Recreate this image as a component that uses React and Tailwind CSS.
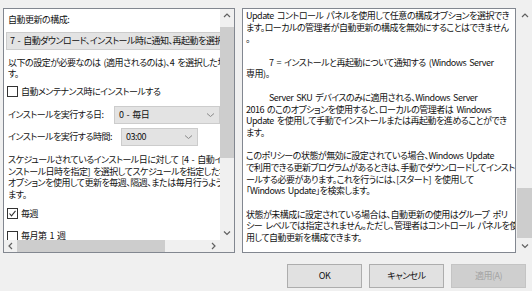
import React from 'react';

const Arrow = ({ dir }) => {
  const pts = {
    up: '1,5 4,2 7,5',
    down: '1,2.5 4,5.5 7,2.5',
    left: '5,1 2,4 5,7',
    right: '3,1 6,4 3,7',
  }[dir];
  return (
    <svg width="8" height="8" viewBox="0 0 8 8">
      <polyline points={pts} fill="none" stroke="#606060" strokeWidth="1.2" />
    </svg>
  );
};

const ComboChevron = () => (
  <svg width="9" height="6" viewBox="0 0 9 6">
    <polyline points="1,1.5 4.5,4.5 8,1.5" fill="none" stroke="#8a8a8a" strokeWidth="1" />
  </svg>
);

const Check = ({ checked }) => (
  <span className="w-[11px] h-[11px] border border-[#333333] bg-white flex items-center justify-center shrink-0">
    {checked && (
      <svg width="9" height="9" viewBox="0 0 9 9">
        <polyline points="1.5,4.5 3.5,6.8 7.5,1.8" fill="none" stroke="#333333" strokeWidth="1.1" />
      </svg>
    )}
  </span>
);

const rightLines = [
  { t: 'Update コントロール パネルを使用して任意の構成オプションを選択でき' },
  { t: 'ます。ローカルの管理者が自動更新の構成を無効にすることはできません' },
  { t: '。' },
  { t: '' },
  { t: '7 = インストールと再起動について通知する (Windows Server', indent: true },
  { t: '専用)。' },
  { t: '' },
  { t: 'Server SKU デバイスのみに適用される、Windows Server', indent: true },
  { t: '2016 のこのオプションを使用すると、ローカルの管理者は Windows' },
  { t: 'Update を使用して手動でインストールまたは再起動を進めることができ' },
  { t: 'ます。' },
  { t: '' },
  { t: 'このポリシーの状態が無効に設定されている場合、Windows Update' },
  { t: 'で利用できる更新プログラムがあるときは、手動でダウンロードしてインスト' },
  { t: 'ールする必要があります。これを行うには、[スタート] を使用して' },
  { t: '「Windows Update」を検索します。' },
  { t: '' },
  { t: '状態が未構成に設定されている場合は、自動更新の使用はグループ ポリ' },
  { t: 'シー レベルでは指定されません。ただし、管理者はコントロール パネルを使' },
  { t: '用して自動更新を構成できます。' },
];

export default function App() {
  return (
    <div className="w-[532px] h-[291px] bg-[#f0f0f0] overflow-hidden text-[9px] leading-[11.7px] tracking-[-0.5px] [word-spacing:1.5px] text-[#111111] font-['Noto_Sans_CJK_JP',sans-serif] [font-feature-settings:'palt']">
      <div className="flex pt-[8px] pl-[3px]">
        {/* left: option panel */}
        <div className="w-[232px] h-[245px] border border-[#828790] bg-white grid grid-cols-[216px_14px] grid-rows-[231px_12px]">
          <div className="overflow-hidden whitespace-nowrap pt-[5px]">
            <div className="pl-[4px]">自動更新の構成:</div>
            <div className="ml-[2px] mt-[6px] w-[300px] h-[18px] bg-[#e3e3e3] border border-[#cccccc] flex items-center pl-[3px]">
              7 - 自動ダウンロード、インストール時に通知、再起動を選択
            </div>
            <div className="pl-[4px] mt-[7px]">以下の設定が必要なのは (適用されるのは)、4 を選択した場合のみで</div>
            <div className="pl-[4px]">す。</div>
            <div className="pl-[3px] mt-[6px] flex items-center gap-[3px]">
              <Check />
              <span>自動メンテナンス時にインストールする</span>
            </div>
            <div className="pl-[4px] mt-[8px] flex items-center">
              <span className="w-[113px]">インストールを実行する日:</span>
              <div className="w-[106px] h-[18px] shrink-0 bg-[#e3e3e3] border border-[#cccccc] flex items-center justify-between pl-[4px] pr-[4px]">
                <span>0 - 毎日</span>
                <ComboChevron />
              </div>
            </div>
            <div className="pl-[4px] mt-[4px] flex items-center">
              <span className="w-[113px]">インストールを実行する時間:</span>
              <div className="w-[77px] h-[18px] bg-[#e3e3e3] border border-[#cccccc] flex items-center justify-between pl-[4px] pr-[4px]">
                <span>03:00</span>
                <ComboChevron />
              </div>
            </div>
            <div className="pl-[4px] mt-[8px]">
              <div>スケジュールされているインストール日に対して [4 - 自動イ</div>
              <div>ンストール日時を指定] を選択してスケジュールを指定した場合、</div>
              <div>オプションを使用して更新を毎週、隔週、または毎月行うように制限でき</div>
              <div>ます。</div>
            </div>
            <div className="pl-[3px] mt-[7px] flex items-center gap-[3px]">
              <Check checked />
              <span>毎週</span>
            </div>
            <div className="pl-[3px] mt-[11px] flex items-center gap-[3px]">
              <Check />
              <span>毎月第 1 週</span>
            </div>
          </div>

          {/* vertical scrollbar */}
          <div className="bg-[#f0f0f0] flex flex-col">
            <div className="h-[14px] flex items-center justify-center">
              <Arrow dir="up" />
            </div>
            <div className="flex-1 pt-[4px]">
              <div className="h-[131px] bg-[#cdcdcd]" />
            </div>
            <div className="h-[14px] flex items-center justify-center">
              <Arrow dir="down" />
            </div>
          </div>

          {/* horizontal scrollbar */}
          <div className="bg-[#f0f0f0] flex items-stretch">
            <div className="w-[13px] flex items-center justify-center">
              <Arrow dir="left" />
            </div>
            <div className="flex-1">
              <div className="w-[148px] h-full bg-[#cdcdcd]" />
            </div>
            <div className="w-[14px] flex items-center justify-center">
              <Arrow dir="right" />
            </div>
          </div>
          <div className="bg-[#f0f0f0]" />
        </div>

        {/* right: help text */}
        <div className="ml-[7px] w-[274px] h-[245px] border border-[#828790] bg-white overflow-hidden whitespace-nowrap pt-[1px] pl-[3px]">
          {rightLines.map((l, i) => (
            <div key={i} className={`h-[11.7px] ${l.indent ? 'pl-[23px]' : ''}`}>
              {l.t}
            </div>
          ))}
        </div>
        <div className="w-[16px] h-[245px] flex flex-col pl-[1px]">
          <div className="h-[15px] flex items-center justify-center">
            <Arrow dir="up" />
          </div>
          <div className="flex-1 flex flex-col justify-end">
            <div className="h-[50px] bg-[#cdcdcd]" />
          </div>
          <div className="h-[15px] flex items-center justify-center">
            <Arrow dir="down" />
          </div>
        </div>
      </div>

      {/* buttons */}
      <div className="flex justify-end gap-[7px] pr-[6px] mt-[11px]">
        <button className="w-[75px] h-[24px] bg-[#e1e1e1] border border-[#adadad] flex items-center justify-center">
          OK
        </button>
        <button className="w-[75px] h-[24px] bg-[#e1e1e1] border border-[#adadad] flex items-center justify-center">
          キャンセル
        </button>
        <button className="w-[75px] h-[24px] bg-[#cfcfcf] border border-[#c4c4c4] text-[#a3a3a3] flex items-center justify-center">
          適用(A)
        </button>
      </div>
    </div>
  );
}
